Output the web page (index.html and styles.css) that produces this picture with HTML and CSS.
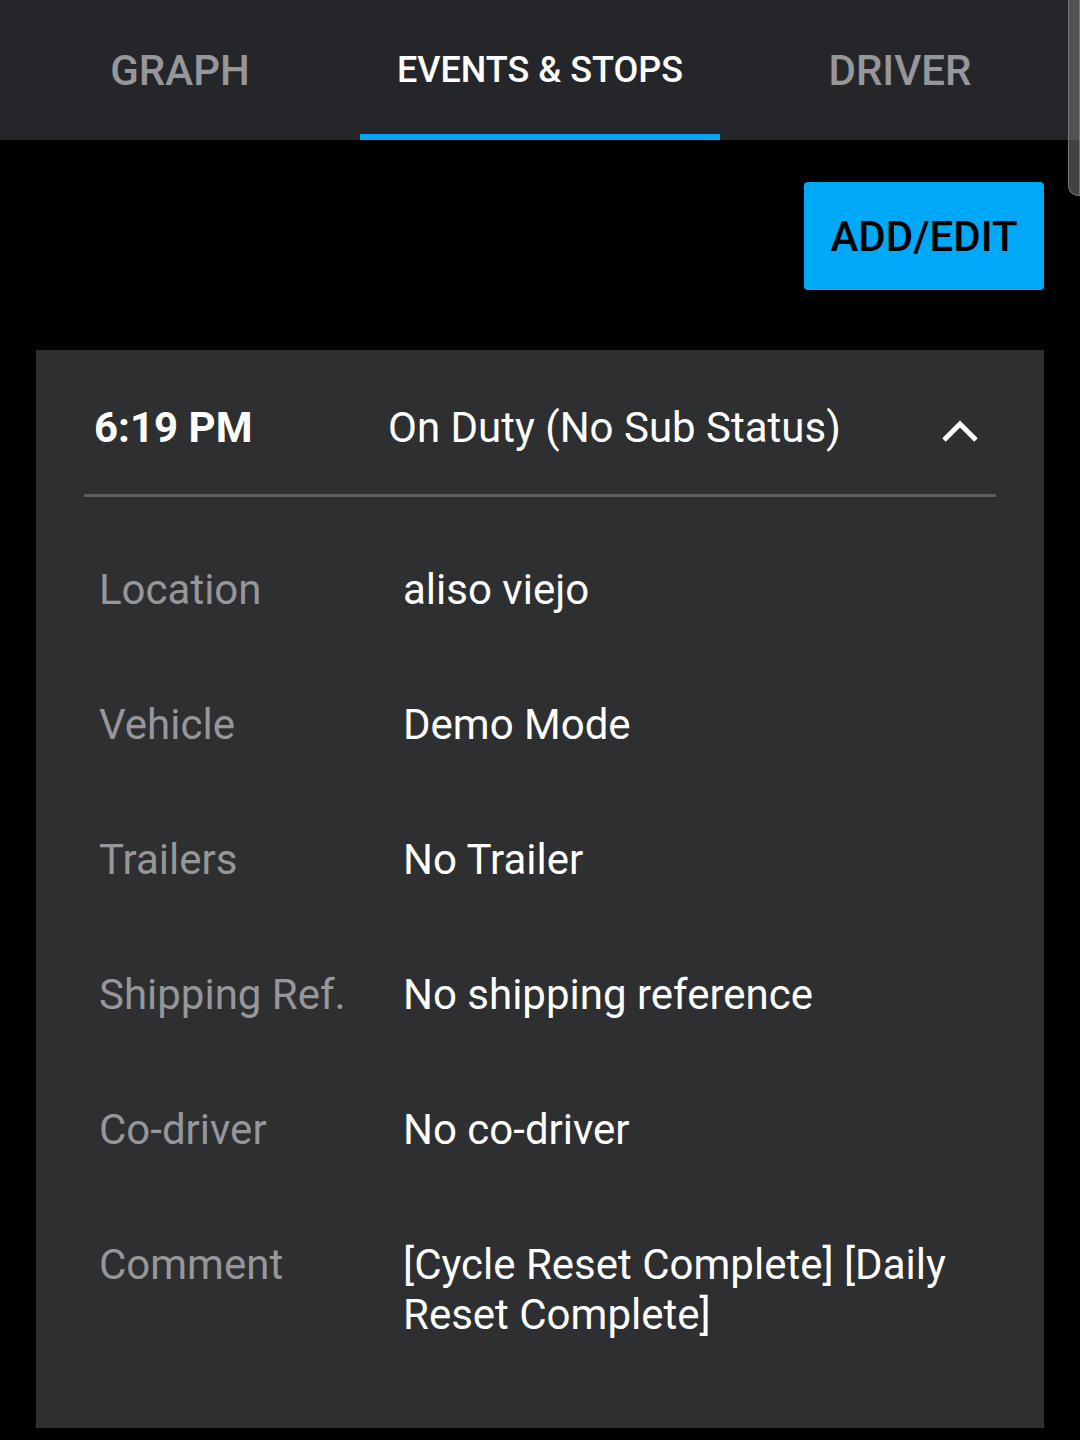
FILE: index.html
```html
<!DOCTYPE html>
<html>
<head>
<meta charset="utf-8">
<link rel="stylesheet" href="styles.css">
</head>
<body>
<div class="tabs">
  <div class="tab">GRAPH</div>
  <div class="tab active">EVENTS &amp; STOPS</div>
  <div class="tab">DRIVER</div>
</div>
<div class="scrollbar"></div>
<div class="actions">
  <button class="btn">ADD/EDIT</button>
</div>
<div class="card">
  <div class="card-head">
    <div class="time">6:19 PM</div>
    <div class="status">On Duty (No Sub Status)</div>
    <svg class="chev" width="38" height="26" viewBox="0 0 38 26"><path d="M3 22 L19 6 L35 22" fill="none" stroke="#fff" stroke-width="5"/></svg>
  </div>
  <div class="rows">
    <div class="row"><div class="label">Location</div><div class="value">aliso viejo</div></div>
    <div class="row"><div class="label">Vehicle</div><div class="value">Demo Mode</div></div>
    <div class="row"><div class="label">Trailers</div><div class="value">No Trailer</div></div>
    <div class="row"><div class="label">Shipping Ref.</div><div class="value">No shipping reference</div></div>
    <div class="row"><div class="label">Co-driver</div><div class="value">No co-driver</div></div>
    <div class="row"><div class="label">Comment</div><div class="value">[Cycle Reset Complete] [Daily Reset Complete]</div></div>
  </div>
</div>
</body>
</html>
```
FILE: styles.css
```css
html, body {
  margin: 0;
  padding: 0;
  background: #000;
  font-family: Roboto, "Liberation Sans", sans-serif;
}
body {
  position: relative;
  width: 1080px;
  height: 1440px;
  overflow: hidden;
}
.tabs {
  display: flex;
  height: 140px;
  background: #252629;
}
.tab {
  flex: 1;
  display: flex;
  align-items: center;
  justify-content: center;
  font-size: 42px;
  font-weight: 500;
  color: #96979b;
  box-sizing: border-box;
}
.tab.active {
  color: #fff;
  border-bottom: 6px solid #03a9f4;
  padding-top: 6px;
  font-size: 36px;
}
.scrollbar {
  position: absolute;
  top: -10px;
  right: 0;
  width: 12px;
  height: 206px;
  background: rgba(120,120,124,0.55);
  border: 1px solid rgba(170,170,170,0.45);
  border-radius: 0 0 0 10px;
  box-sizing: border-box;
}
.actions {
  display: flex;
  justify-content: flex-end;
  padding: 42px 36px 60px 0;
}
.btn {
  width: 240px;
  height: 108px;
  border: none;
  border-radius: 4px;
  background: #00a8f8;
  color: #000;
  font-family: Roboto, "Liberation Sans", sans-serif;
  font-size: 42px;
  font-weight: 500;
  padding: 0;
}
.card {
  margin: 0 36px;
  background: #2e2f31;
  height: 1078px;
  box-sizing: border-box;
}
.card-head {
  display: flex;
  align-items: center;
  height: 144px;
  margin: 0 48px;
  border-bottom: 3px solid #5c5d60;
  box-sizing: content-box;
}
.time {
  width: 294px;
  padding-left: 10px;
  font-size: 42px;
  font-weight: 700;
  color: #fff;
  padding-top: 10px;
}
.status {
  flex: 1;
  font-size: 42px;
  color: #fff;
  padding-top: 10px;
}
.chev {
  margin-right: 17px;
  margin-top: 18px;
}
.rows {
  padding: 26px 48px 0 63px;
}
.row {
  display: flex;
  padding: 42px 0 43px;
  font-size: 42px;
  line-height: 50px;
}
.label {
  width: 304px;
  flex-shrink: 0;
  color: #96979b;
}
.value {
  color: #fff;
  flex: 1;
}
```
